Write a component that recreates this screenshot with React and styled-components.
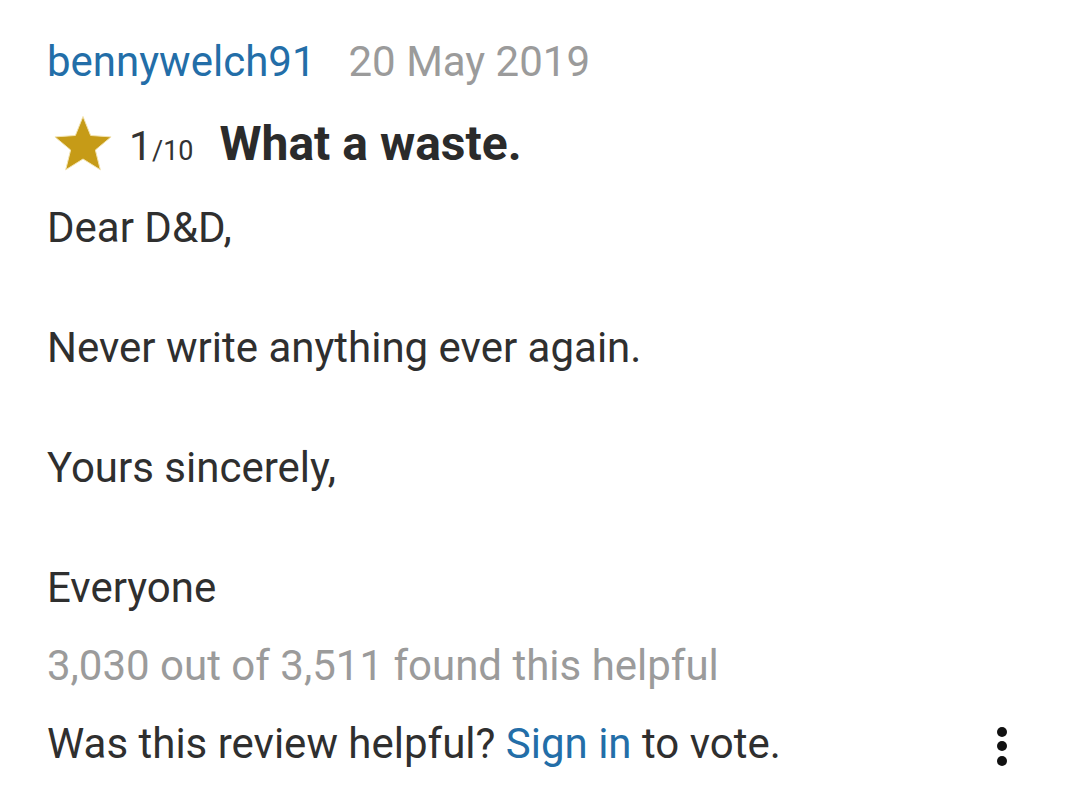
import styled, { createGlobalStyle } from "styled-components";

const GlobalStyle = createGlobalStyle`
  body {
    margin: 0;
    background: #ffffff;
    font-family: Roboto, "Liberation Sans", sans-serif;
  }
`;

const Review = styled.article`
  padding: 32px 73px 0 47px;
  color: #2f2f2f;
  font-size: 42px;
  line-height: 60px;
`;

const Meta = styled.div`
  display: flex;
  align-items: baseline;
  gap: 33px;
`;

const User = styled.a`
  color: #236ea8;
  text-decoration: none;
`;

const Date = styled.span`
  color: #9b9b9b;
`;

const RatingRow = styled.div`
  display: flex;
  align-items: baseline;
  height: 60px;
  margin-top: 22px;
`;

const StarIcon = styled.svg`
  align-self: center;
  width: 60px;
  height: 58px;
  margin-left: 6px;
  margin-right: 16px;
  flex-shrink: 0;
`;

const Score = styled.span`
  font-size: 41px;
  color: #333333;
  small {
    font-size: 27px;
  }
`;

const Title = styled.h2`
  margin: 0 0 0 26px;
  font-size: 48px;
  font-weight: 700;
  line-height: 60px;
  color: #2b2b2b;
`;

const Body = styled.div`
  margin-top: 24px;
  p {
    margin: 0 0 60px;
  }
  p:last-child {
    margin-bottom: 0;
  }
`;

const Helpful = styled.div`
  margin-top: 18px;
  color: #9b9b9b;
`;

const Footer = styled.div`
  display: flex;
  align-items: center;
  justify-content: space-between;
  margin-top: 18px;
`;

const SignIn = styled.a`
  color: #236ea8;
  text-decoration: none;
`;

const Kebab = styled.button`
  display: flex;
  flex-direction: column;
  align-items: center;
  gap: 4.5px;
  padding: 0;
  margin-top: 4px;
  border: 0;
  background: none;
  span {
    width: 10px;
    height: 10px;
    border-radius: 50%;
    background: #111111;
  }
`;

const starPoints = () => {
  const pts = [];
  for (let k = 0; k < 10; k++) {
    const a = ((-90 + k * 36) * Math.PI) / 180;
    const r = k % 2 === 0 ? 29.5 : 13;
    pts.push(`${(30 + r * Math.cos(a)).toFixed(2)},${(31 + r * Math.sin(a)).toFixed(2)}`);
  }
  return pts.join(" ");
};

const Star = () => (
  <StarIcon viewBox="0 0 60 58">
    <polygon
      points={starPoints()}
      fill="#c69b17"
      stroke="#f3e4b0"
      strokeWidth="1"
      strokeLinejoin="round"
    />
  </StarIcon>
);

export default function App() {
  return (
    <>
      <GlobalStyle />
      <Review>
        <Meta>
          <User href="#">bennywelch91</User>
          <Date>20 May 2019</Date>
        </Meta>
        <RatingRow>
          <Star />
          <Score>
            1<small>/10</small>
          </Score>
          <Title>What a waste.</Title>
        </RatingRow>
        <Body>
          <p>Dear D&amp;D,</p>
          <p>Never write anything ever again.</p>
          <p>Yours sincerely,</p>
          <p>Everyone</p>
        </Body>
        <Helpful>3,030 out of 3,511 found this helpful</Helpful>
        <Footer>
          <span>
            Was this review helpful? <SignIn href="#">Sign in</SignIn> to vote.
          </span>
          <Kebab aria-label="More options">
            <span />
            <span />
            <span />
          </Kebab>
        </Footer>
      </Review>
    </>
  );
}
